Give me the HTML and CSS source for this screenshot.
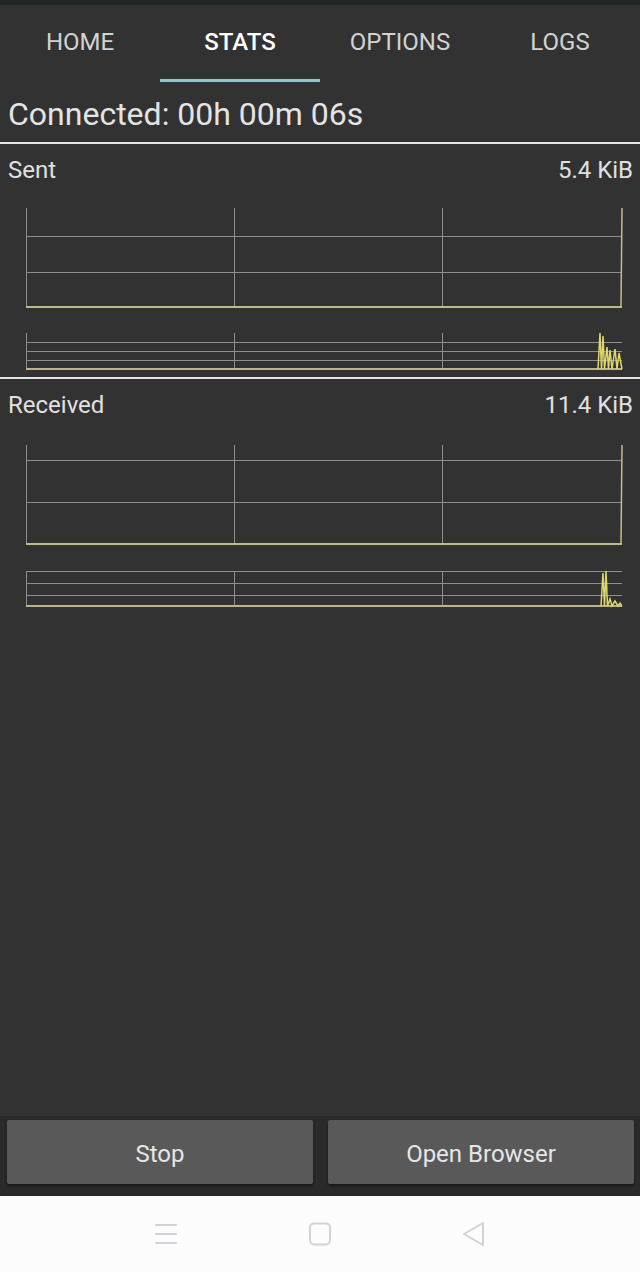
FILE: index.html
```html
<!DOCTYPE html>
<html>
<head>
<meta charset="utf-8">
<link rel="stylesheet" href="styles.css">
</head>
<body>
<div class="app">
  <div class="statusbar"></div>
  <nav class="tabs">
    <div class="tab">HOME</div>
    <div class="tab active">STATS</div>
    <div class="tab">OPTIONS</div>
    <div class="tab">LOGS</div>
  </nav>
  <div class="connected">Connected: 00h 00m 06s</div>

  <section class="stat stat-sent">
    <div class="stat-head"><span>Sent</span><span>5.4 KiB</span></div>
    <svg class="graph" width="640" height="192" viewBox="0 0 640 192">
      <g class="grid">
        <line x1="26.5" y1="23" x2="26.5" y2="122"/>
        <line x1="234.5" y1="23" x2="234.5" y2="122"/>
        <line x1="442.5" y1="23" x2="442.5" y2="122"/>
        <line x1="26" y1="51.5" x2="622" y2="51.5"/>
        <line x1="26" y1="87.5" x2="622" y2="87.5"/>
        <line x1="26.5" y1="148" x2="26.5" y2="184"/>
        <line x1="234.5" y1="148" x2="234.5" y2="184"/>
        <line x1="442.5" y1="148" x2="442.5" y2="184"/>
        <line x1="26" y1="157.5" x2="622" y2="157.5"/>
        <line x1="26" y1="166.5" x2="622" y2="166.5"/>
        <line x1="26" y1="175.5" x2="622" y2="175.5"/>
      </g>
      <line class="base" x1="26" y1="122" x2="622" y2="122"/>
      <line class="base" x1="26" y1="184" x2="622" y2="184"/>
      <polyline class="data" points="26,122 621,122 622,23"/>
      <polyline class="data" points="598,184 600,148 601.5,184 603,151 604.5,184 607,162 608.5,184 610,165 612,184 615,164 617,184 619,168 622,184"/>
    </svg>
  </section>

  <section class="stat stat-recv">
    <div class="stat-head"><span>Received</span><span>11.4 KiB</span></div>
    <svg class="graph" width="640" height="190" viewBox="0 0 640 190">
      <g class="grid">
        <line x1="26.5" y1="25" x2="26.5" y2="124"/>
        <line x1="234.5" y1="25" x2="234.5" y2="124"/>
        <line x1="442.5" y1="25" x2="442.5" y2="124"/>
        <line x1="26" y1="40.5" x2="622" y2="40.5"/>
        <line x1="26" y1="82.5" x2="622" y2="82.5"/>
        <line x1="26.5" y1="151" x2="26.5" y2="186"/>
        <line x1="234.5" y1="151" x2="234.5" y2="186"/>
        <line x1="442.5" y1="151" x2="442.5" y2="186"/>
        <line x1="26" y1="151.5" x2="622" y2="151.5"/>
        <line x1="26" y1="163.5" x2="622" y2="163.5"/>
        <line x1="26" y1="175.5" x2="622" y2="175.5"/>
      </g>
      <line class="base" x1="26" y1="124" x2="622" y2="124"/>
      <line class="base" x1="26" y1="186" x2="622" y2="186"/>
      <polyline class="data" points="26,124 621,124 622,25"/>
      <polyline class="data" points="601,186 603,153 604.5,186 606,151 607.5,186 610,179 612,186 615,181 618,186 620,183 622,186"/>
    </svg>
  </section>

  <div class="spacer"></div>

  <div class="buttons">
    <button class="btn">Stop</button>
    <button class="btn">Open Browser</button>
  </div>

  <div class="navbar">
    <svg class="nav-icon" width="24" height="24" viewBox="0 0 24 24">
      <path d="M2 3h20M2 12h20M2 21h20"/>
    </svg>
    <svg class="nav-icon" width="24" height="24" viewBox="0 0 24 24">
      <rect x="2" y="1.5" width="20" height="21" rx="4"/>
    </svg>
    <svg class="nav-icon" width="24" height="24" viewBox="0 0 24 24">
      <path d="M21 1 L2 12 L21 23 Z" stroke-linejoin="round"/>
    </svg>
  </div>
</div>
</body>
</html>
```
FILE: styles.css
```css
html, body {
  margin: 0;
  padding: 0;
  background: #323232;
}

body {
  font-family: Roboto, "Liberation Sans", sans-serif;
  color: #e2e2e2;
}

.app {
  width: 640px;
  height: 1272px;
  display: flex;
  flex-direction: column;
  background: #323232;
}

.statusbar {
  height: 5px;
  background: #1f2a27;
  flex: none;
}

.tabs {
  display: flex;
  flex: none;
}

.tab {
  width: 160px;
  text-align: center;
  font-size: 24px;
  line-height: 24px;
  padding: 25px 0 25px;
  border-bottom: 3px solid transparent;
  color: #d2d2d2;
  font-weight: 400;
}

.tab.active {
  color: #ffffff;
  font-weight: 500;
  border-bottom-color: #93c6c8;
}

.connected {
  flex: none;
  font-size: 32px;
  line-height: 40px;
  padding: 12px 8px 8px;
  border-bottom: 2px solid #e4e4e4;
  color: #e4e4e4;
}

.stat {
  flex: none;
}

.stat-sent {
  border-bottom: 2px solid #e4e4e4;
}

.stat-head {
  display: flex;
  justify-content: space-between;
  font-size: 24px;
  line-height: 30px;
  padding: 11px 7px 0 8px;
  color: #e0e0e0;
}

.graph {
  display: block;
}

.grid line {
  stroke: #8e8e8e;
  stroke-width: 1;
}

.base {
  stroke: #bab38e;
  stroke-width: 2;
}

.data {
  fill: none;
  stroke: #ddd86a;
  stroke-width: 1.5;
}

.base + .base + .data {
  stroke: #c4bd86;
}

.spacer {
  flex: 1;
}

.buttons {
  flex: none;
  display: flex;
  gap: 15px;
  padding: 4px 6px 12px 7px;
  background: #2a2a2a;
}

.btn {
  flex: 1;
  height: 64px;
  border: none;
  border-radius: 2px;
  background: #595959;
  color: #e6e6e6;
  font-family: Roboto, "Liberation Sans", sans-serif;
  font-size: 24px;
  padding: 4px 0 0;
  box-shadow: 0 2px 3px rgba(0, 0, 0, 0.45);
}

.navbar {
  flex: none;
  height: 76px;
  background: #fdfcfd;
  display: flex;
  justify-content: center;
  align-items: center;
  gap: 130px;
}

.nav-icon {
  fill: none;
  stroke: #d2d2d6;
  stroke-width: 2;
  stroke-linecap: round;
}
```
